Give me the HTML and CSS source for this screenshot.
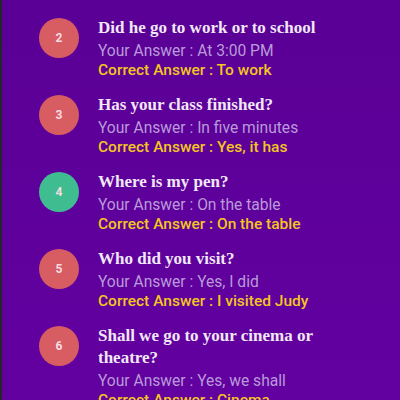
FILE: index.html
```html
<!DOCTYPE html>
<html lang="en">
<head>
<meta charset="UTF-8" />
<meta name="viewport" content="width=device-width, initial-scale=1" />
<title>Quiz Results</title>
<link rel="stylesheet" href="styles.css">
</head>
<body>
  <div class="screen">
    <div class="results">
      <!-- item 1 is scrolled mostly off the top -->
      <div class="result">
        <div class="badge wrong">1</div>
        <div class="text">
          <div class="question">Do you go to school every day?</div>
          <div class="your">Your Answer : No, I don't</div>
          <div class="correct">Correct Answer : Yes, I do</div>
        </div>
      </div>

      <div class="result">
        <div class="badge wrong">2</div>
        <div class="text">
          <div class="question">Did he go to work or to school</div>
          <div class="your">Your Answer : At 3:00 PM</div>
          <div class="correct">Correct Answer : To work</div>
        </div>
      </div>

      <div class="result">
        <div class="badge wrong">3</div>
        <div class="text">
          <div class="question">Has your class finished?</div>
          <div class="your">Your Answer : In five minutes</div>
          <div class="correct">Correct Answer : Yes, it has</div>
        </div>
      </div>

      <div class="result">
        <div class="badge right">4</div>
        <div class="text">
          <div class="question">Where is my pen?</div>
          <div class="your">Your Answer : On the table</div>
          <div class="correct">Correct Answer : On the table</div>
        </div>
      </div>

      <div class="result">
        <div class="badge wrong">5</div>
        <div class="text">
          <div class="question">Who did you visit?</div>
          <div class="your">Your Answer : Yes, I did</div>
          <div class="correct">Correct Answer : I visited Judy</div>
        </div>
      </div>

      <div class="result">
        <div class="badge wrong">6</div>
        <div class="text">
          <div class="question">Shall we go to your cinema or theatre?</div>
          <div class="your">Your Answer : Yes, we shall</div>
          <div class="correct">Correct Answer : Cinema</div>
        </div>
      </div>
    </div>
  </div>
</body>
</html>
```

FILE: styles.css
```css
html, body {
  margin: 0;
  padding: 0;
  height: 100%;
  overflow: hidden;
  font-family: Roboto, 'Liberation Sans', sans-serif;
}
.screen {
  height: 100vh;
  box-sizing: border-box;
  border-left: 2px solid #24262a;
  background: linear-gradient(180deg, #5a0096 0%, #6200a0 100%);
  overflow: hidden;
}
.results {
  display: flex;
  flex-direction: column;
  gap: 14px;
  margin-top: -60px;
  padding-left: 37px;
}
.result {
  display: flex;
  align-items: flex-start;
  gap: 19px;
}
.badge {
  flex: none;
  width: 40px;
  height: 40px;
  margin-top: 1px;
  border-radius: 50%;
  display: flex;
  align-items: center;
  justify-content: center;
  font-size: 12px;
  font-weight: 700;
  color: #f6dbe2;
}
.badge.wrong {
  background: #d75d62;
}
.badge.right {
  background: #3fbd91;
}
.text {
  width: 230px;
}
.question {
  font-family: 'Liberation Serif', serif;
  font-weight: 700;
  font-size: 17px;
  line-height: 22px;
  color: #f1e8f6;
  margin-bottom: 3px;
}
.your {
  font-size: 15.6px;
  line-height: 19px;
  color: #b99bd9;
}
.correct {
  font-size: 15.5px;
  line-height: 19px;
  font-weight: 500;
  color: #f3c622;
}
```
